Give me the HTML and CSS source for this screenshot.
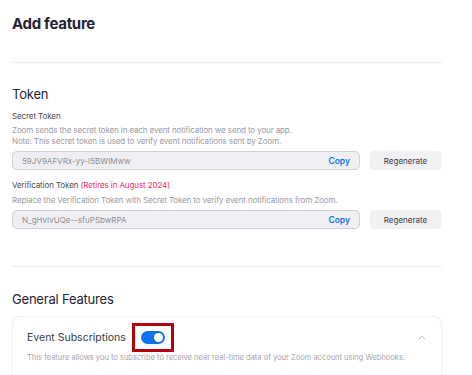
FILE: index.html
```html
<!DOCTYPE html>
<html lang="en">
<head>
    <meta charset="UTF-8">
    <meta name="viewport" content="width=device-width, initial-scale=1.0">
    <title>Add feature</title>
    <link rel="stylesheet" href="styles.css">
</head>
<body>
    <div class="page">
        <h1 class="page-title">Add feature</h1>
        <hr class="divider">

        <h2 class="section-title">Token</h2>

        <div class="field">
            <div class="field-label">Secret Token</div>
            <div class="field-help">Zoom sends the secret token in each event notification we send to your app.<br>Note: This secret token is used to verify event notifications sent by Zoom.</div>
            <div class="token-row">
                <div class="token-input">
                    <span class="token-value">59JV9AFVRx-yy-I5BWIMww</span>
                    <span class="copy">Copy</span>
                </div>
                <button class="regen">Regenerate</button>
            </div>
        </div>

        <div class="field">
            <div class="field-label">Verification Token <span class="retire">(Retires in August 2024)</span></div>
            <div class="field-help">Replace the Verification Token with Secret Token to verify event notifications from Zoom.</div>
            <div class="token-row">
                <div class="token-input">
                    <span class="token-value">N_gHvIvUQe--sfuPSbwRPA</span>
                    <span class="copy">Copy</span>
                </div>
                <button class="regen">Regenerate</button>
            </div>
        </div>

        <hr class="divider divider-low">

        <h2 class="section-title general">General Features</h2>

        <div class="card">
            <div class="card-head">
                <span class="card-title">Event Subscriptions</span>
                <span class="highlight">
                    <span class="toggle"><span class="knob"></span></span>
                </span>
                <svg class="chevron" width="8" height="5" viewBox="0 0 8 5"><path d="M1 4.2 L4 1.2 L7 4.2" fill="none" stroke="#b5b5bd" stroke-width="1"/></svg>
            </div>
            <div class="card-desc">This feature allows you to subscribe to receive near real-time data of your Zoom account using Webhooks.</div>
        </div>
    </div>
</body>
</html>
```

FILE: styles.css
```css
body {
    margin: 0;
    background: #fff;
    font-family: Inter, "Noto Sans", sans-serif;
    color: #232333;
}
.page {
    width: 430px;
    padding: 14px 0 0 12px;
}
.page-title {
    margin: 0;
    font-size: 15px;
    font-weight: 700;
    line-height: 19px;
    letter-spacing: -0.3px;
}
.divider {
    border: none;
    border-top: 1px solid #ededf0;
    margin: 29px 0 0;
}
.section-title {
    margin: 0;
    font-size: 13px;
    font-weight: 400;
    line-height: 16px;
    margin-top: 23px;
    letter-spacing: -0.2px;
}
.field {
    margin-top: 9px;
}
.field + .field {
    margin-top: 10px;
}
.field-label {
    font-size: 8px;
    line-height: 11px;
    color: #4a4a55;
    letter-spacing: -0.1px;
}
.retire {
    color: #e8305a;
}
.field-help {
    font-size: 8px;
    line-height: 11px;
    color: #9a9aa4;
    margin-top: 3px;
    letter-spacing: -0.12px;
}
.field + .field .field-help {
    margin-top: 4px;
}
.token-row {
    display: flex;
    gap: 10px;
    margin-top: 4px;
}
.token-input {
    width: 348px;
    height: 19px;
    box-sizing: border-box;
    border: 1px solid #cfd0d8;
    border-radius: 5px;
    background: #efeff3;
    display: flex;
    align-items: center;
    justify-content: space-between;
    padding: 0 9px;
    font-size: 8px;
}
.token-value {
    color: #8e8e98;
}
.copy {
    color: #0e72ed;
    font-weight: 600;
    font-size: 8.5px;
}
.regen {
    width: 71px;
    height: 19px;
    border: none;
    border-radius: 4px;
    background: #f1f1f4;
    font-family: inherit;
    font-size: 8px;
    color: #3a3a45;
    padding: 0;
}
.divider-low {
    margin-top: 37px;
}
.general {
    margin-top: 24px;
}
.card {
    margin-top: 9px;
    border: 1px solid #efeff2;
    border-bottom: none;
    border-radius: 8px 8px 0 0;
    padding: 6px 14px 20px;
}
.card-head {
    display: flex;
    align-items: center;
}
.card-title {
    font-size: 10.5px;
    color: #3a3a45;
}
.highlight {
    display: flex;
    align-items: center;
    margin-left: 6px;
    padding: 5px 6px;
    border: 3px solid #b4000e;
}
.toggle {
    width: 24px;
    height: 13px;
    border-radius: 7px;
    background: #0e72ed;
    display: flex;
    align-items: center;
    justify-content: flex-end;
    padding: 0 2px;
    box-sizing: border-box;
}
.knob {
    width: 9px;
    height: 9px;
    border-radius: 50%;
    background: #fff;
}
.chevron {
    margin-left: auto;
    margin-right: 1px;
}
.card-desc {
    margin-top: 1px;
    font-size: 7.5px;
    line-height: 10px;
    color: #a4a4ad;
}
```
